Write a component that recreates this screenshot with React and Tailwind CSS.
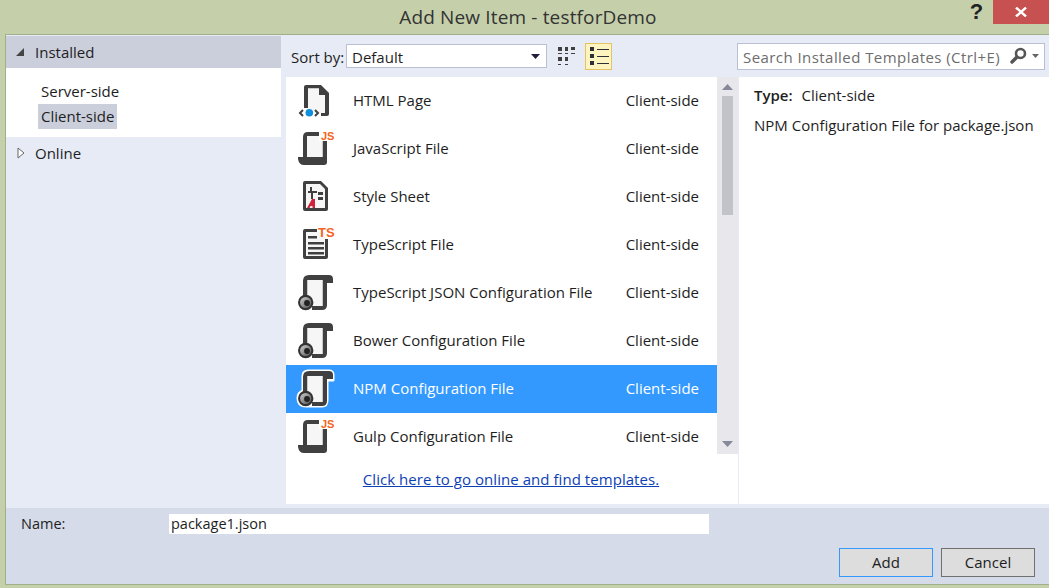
import React from "react";

const font = { fontFamily: '"Open Sans","Noto Sans",sans-serif' };
const labelFont = "Liberation Sans, sans-serif";

function IconHtml() {
  return (
    <svg width="36" height="36" viewBox="0 0 36 36" className="overflow-visible">
      <path d="M6 4 Q6 2 8 2 H23 L31 10 V31 Q31 33 29 33 H23 V30 H27 V12 H21 V5.5 H10 V25 H6 Z" fill="#404040" />
      <path d="M10 5.5 H21 V12 H27 V30 H10 Z" fill="#f6f6f6" />
      <circle cx="11.3" cy="29.7" r="3.8" fill="#0f8fdc" />
      <path d="M5 27 L2 30 L5 33 M17 27 L20 30 L17 33" stroke="#404040" strokeWidth="2" fill="none" />
    </svg>
  );
}

function IconJs() {
  return (
    <svg width="36" height="36" viewBox="0 0 36 36" className="overflow-visible">
      <path d="M5 6 Q5 1 10 1 H24 V5 H11 Q9 5 9 7 V26 H24.5 V8 H29 V31 Q29 34 26 34 H6 Q1 34 0 28 L0 26 H5 Z" fill="#404040" />
      <rect x="9" y="5" width="15.5" height="21" fill="#f6f6f6" />
      <rect x="21" y="0" width="15" height="10" fill="#fff" />
      <text x="23" y="9" fill="#f26522" fontSize="11" fontWeight="800" fontFamily={labelFont}>JS</text>
    </svg>
  );
}

function IconCss() {
  return (
    <svg width="36" height="36" viewBox="0 0 36 36" className="overflow-visible">
      <path d="M5 4 Q5 2 7 2 H23 L30 9 V30 Q30 32 28 32 H7 Q5 32 5 30 Z" fill="#404040" />
      <path d="M8 5 H22 L27 10 V29 H8 Z" fill="#f6f6f6" />
      <path d="M12 8 H14 V12 H19 V14 H15 V20 H13 V14 H10 V12 H12 Z" fill="#404040" />
      <rect x="20" y="13" width="5" height="3" fill="#404040" />
      <rect x="20" y="18" width="5" height="3" fill="#404040" />
      <path d="M9 29 L14 20 H17 V29 H14.5 V27 H12.5 L11.5 29 Z" fill="#d1213a" />
    </svg>
  );
}

function IconTs() {
  return (
    <svg width="36" height="36" viewBox="0 0 36 36" className="overflow-visible">
      <path d="M5 4 Q5 2 7 2 H19 V5 H8 V29 H27 V12 H30 V30 Q30 32 28 32 H7 Q5 32 5 30 Z" fill="#404040" />
      <rect x="8" y="5" width="19" height="24" fill="#f6f6f6" />
      <rect x="10" y="9" width="9" height="2.5" fill="#404040" />
      <rect x="10" y="15" width="16" height="2.5" fill="#404040" />
      <rect x="10" y="20" width="16" height="2.5" fill="#404040" />
      <rect x="10" y="25" width="16" height="2.5" fill="#404040" />
      <text x="20" y="10" fill="#f26522" fontSize="13" fontWeight="800" fontFamily={labelFont}>TS</text>
    </svg>
  );
}

function IconConfig({ highlight }) {
  const id = highlight ? "gear-sel" : "gear";
  return (
    <svg width="36" height="36" viewBox="0 0 36 36" className="overflow-visible">
      <defs>
        <linearGradient id={id} x1="0" y1="0" x2="1" y2="1">
          <stop offset="0" stopColor="#d0d0d0" />
          <stop offset="0.55" stopColor="#8a8a8a" />
          <stop offset="1" stopColor="#4a4a4a" />
        </linearGradient>
      </defs>
      {highlight && (
        <path d="M5 5 Q5 0 10 0 H31 Q35 0 35 4 V9 H29 V29 Q29 35 24 35 H8 Q0 35 0 27 Q0 22 5 20 Z" fill="#fff" stroke="#fff" strokeWidth="3" strokeLinejoin="round" />
      )}
      <path d="M5 6 Q5 0 11 0 H31 Q35 0 35 4 V8 H29 V30 Q29 35 24 35 H14 V31 H24.5 V5 H9.5 V22 H5 Z" fill="#404040" />
      <rect x="9.5" y="5" width="15" height="26" fill="#f6f6f6" />
      <circle cx="7.7" cy="27.5" r="7.7" fill="#333" />
      <circle cx="7.7" cy="27.5" r="5.6" fill={`url(#${id})`} />
      <circle cx="9" cy="28" r="2.9" fill="#222" />
    </svg>
  );
}

const items = [
  ["HTML Page", <IconHtml />],
  ["JavaScript File", <IconJs />],
  ["Style Sheet", <IconCss />],
  ["TypeScript File", <IconTs />],
  ["TypeScript JSON Configuration File", <IconConfig />],
  ["Bower Configuration File", <IconConfig />],
  ["NPM Configuration File", <IconConfig highlight />, true],
  ["Gulp Configuration File", <IconJs />],
];

function GridIcon() {
  return (
    <svg width="18" height="18" viewBox="0 0 18 18" fill="#404040">
      <rect x="0" y="0" width="4" height="4" /><rect x="7" y="0" width="3" height="4" /><rect x="13" y="0" width="4" height="3" />
      <rect x="0" y="6" width="4" height="1" /><rect x="7" y="6" width="3" height="1" /><rect x="13" y="6" width="4" height="1" />
      <rect x="0" y="10" width="4" height="4" /><rect x="7" y="10" width="3" height="4" />
      <rect x="0" y="17" width="3" height="1" /><rect x="7" y="17" width="3" height="1" />
    </svg>
  );
}

function ListIcon() {
  return (
    <svg width="20" height="20" viewBox="0 0 20 20">
      <g fill="#2f2f3a">
        <rect x="1" y="1" width="4" height="4" /><rect x="1" y="8" width="4" height="4" /><rect x="1" y="15" width="4" height="4" />
        <rect x="8" y="3" width="12" height="1" /><rect x="8" y="10" width="12" height="1" /><rect x="8" y="17" width="12" height="1" />
      </g>
    </svg>
  );
}

export default function App() {
  return (
    <div className="w-[1049px] h-[588px] overflow-hidden flex flex-col bg-[#c5d0ab] text-[#1e1e1e] text-[15px]" style={font}>
      <div className="h-[34px] shrink-0 flex items-start">
        <div className="flex-1 pl-[96px] h-[34px] flex items-center justify-center text-[19px] tracking-[0.15px] text-[#333]">Add New Item - testforDemo</div>
        <div className="w-[33px] text-center font-bold text-[22px] leading-[24px] text-[#222]" style={{ fontFamily: labelFont }}>?</div>
        <div className="w-[56px] h-[24px] bg-[#c75050] flex items-center justify-center">
          <svg width="12" height="10" viewBox="0 0 12 10"><path d="M1 0.5 L11 9.5 M11 0.5 L1 9.5" stroke="#fff" strokeWidth="2.4" /></svg>
        </div>
      </div>
      <div className="ml-[5px] mb-[3px] flex-1 flex flex-col border-l border-t border-b border-[#9fb08a] bg-[#e6ebf5] min-h-0">
        <div className="flex-1 flex min-h-0">
          <div className="w-[275px] shrink-0 pt-px">
            <div className="h-[32px] bg-[#cbcfdc] flex items-center gap-[9px] pl-[8px]">
              <svg width="12" height="12" viewBox="0 0 12 12"><path d="M2 10 H10 V2 Z" fill="#444" /></svg>
              <span>Installed</span>
            </div>
            <div className="h-[69px] bg-white pl-[32px] pt-[11px] flex flex-col items-start">
              <div className="h-[25px] px-[3px] leading-[25px]">Server-side</div>
              <div className="h-[25px] px-[3px] leading-[25px] bg-[#cbcfdc]">Client-side</div>
            </div>
            <div className="h-[32px] flex items-center gap-[7px] pl-[10px]">
              <svg width="12" height="12" viewBox="0 0 12 12"><path d="M2 1 L8 6 L2 11 Z" fill="#fff" stroke="#666" /></svg>
              <span>Online</span>
            </div>
          </div>
          <div className="w-[5px] shrink-0" />
          <div className="flex-1 flex flex-col min-w-0">
            <div className="h-[42px] shrink-0 flex items-center">
              <span className="ml-[5px] w-[55px] shrink-0 pt-[2px]">Sort by:</span>
              <div className="w-[201px] h-[24px] bg-white border border-[#b9c0d6] flex items-center justify-between pl-[5px] pr-[6px]">
                <span className="pt-[2px]">Default</span>
                <svg width="9" height="5" viewBox="0 0 9 5"><path d="M0 0 H9 L4.5 5 Z" fill="#1e1e3a" /></svg>
              </div>
              <div className="ml-[11px] w-[18px] h-[18px] flex"><GridIcon /></div>
              <div className="ml-[9px] w-[27px] h-[27px] bg-[#fdf4bf] border border-[#e5c365] flex items-center justify-center"><ListIcon /></div>
              <div className="ml-auto mr-[4px] w-[308px] h-[27px] bg-white border border-[#b9c0d6] flex items-center justify-between pl-[5px] pr-[5px]">
                <span className="text-[#6d6d6d] tracking-[0.44px] whitespace-nowrap pt-[2px]">Search Installed Templates (Ctrl+E)</span>
                <span className="flex items-center gap-[5px] shrink-0">
                  <svg width="18" height="18" viewBox="0 0 18 18"><circle cx="11.5" cy="6.5" r="4.5" fill="none" stroke="#555" strokeWidth="2.6" /><path d="M8 10 L3 15" stroke="#555" strokeWidth="3.4" strokeLinecap="round" /></svg>
                  <svg width="7" height="4" viewBox="0 0 7 4"><path d="M0 0 H7 L3.5 4 Z" fill="#666" /></svg>
                </span>
              </div>
            </div>
            <div className="flex-1 flex bg-white min-h-0">
              <div className="w-[452px] shrink-0 flex flex-col">
                <div className="flex h-[377px]">
                  <div className="w-[431px] flex flex-col">
                    {items.map(([name, icon, sel]) => (
                      <div key={name} className={`h-[48px] shrink-0 flex items-center ${sel ? "bg-[#3399ff] text-white" : ""}`}>
                        <div className="w-[36px] h-[36px] ml-[12px] shrink-0">{icon}</div>
                        <span className="ml-[19px] flex-1 pb-[1px]">{name}</span>
                        <span className="mr-[18px] pb-[1px]">Client-side</span>
                      </div>
                    ))}
                  </div>
                  <div className="w-[21px] bg-[#e8e8ec] flex flex-col items-center pt-[7px]">
                    <svg width="11" height="6" viewBox="0 0 11 6"><path d="M0 6 H11 L5.5 0 Z" fill="#868999" /></svg>
                    <div className="w-[11px] h-[119px] bg-[#c2c3c9] mt-[6px] flex-none" />
                    <div className="flex-1" />
                    <svg className="mb-[7px]" width="11" height="6" viewBox="0 0 11 6"><path d="M0 0 H11 L5.5 6 Z" fill="#868999" /></svg>
                  </div>
                </div>
                <div className="flex-1 flex items-center justify-center pl-[1px] pr-[3px]">
                  <a className="text-[#0e3fb4] underline tracking-[0.05px]">Click here to go online and find templates.</a>
                </div>
              </div>
              <div className="flex-1 border-l border-[#e6ebf5] pl-[15px] pt-[7px]">
                <div className="h-[22px] leading-[22px]"><span className="font-semibold">Type:</span><span className="ml-[9px]">Client-side</span></div>
                <div className="mt-[8px] h-[22px] leading-[22px] whitespace-nowrap">NPM Configuration File for package.json</div>
              </div>
            </div>
            <div className="h-[4px] shrink-0" />
          </div>
        </div>
        <div className="h-[76px] shrink-0 bg-[#d6dbe9] flex flex-col">
          <div className="h-[32px] flex items-center text-[14.5px]">
            <span className="ml-[15px] w-[148px]">Name:</span>
            <div className="w-[540px] h-[20px] bg-white pl-[2px] leading-[20px]">package1.json</div>
          </div>
          <div className="flex justify-end gap-[8px] pr-[14px] mt-[8px]">
            <div className="w-[94px] h-[29px] bg-[#dddddd] border border-[#3399ff] flex items-center justify-center">Add</div>
            <div className="w-[94px] h-[29px] bg-[#dddddd] border border-[#707070] flex items-center justify-center">Cancel</div>
          </div>
        </div>
      </div>
    </div>
  );
}
